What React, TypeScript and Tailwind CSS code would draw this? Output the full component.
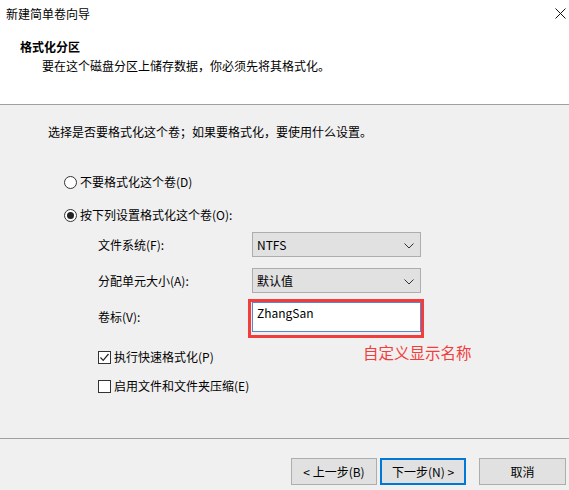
import React from "react";

const Chevron = () => (
  <svg width="10" height="6" viewBox="0 0 10 6" className="absolute right-[6px] top-[10px]">
    <path d="M0.5 0.5 L5 5 L9.5 0.5" fill="none" stroke="#333" strokeWidth="1" />
  </svg>
);

export default function App() {
  return (
    <div
      className="w-[569px] h-[490px] bg-[#f0f0f0] flex flex-col text-[12px] text-black overflow-hidden"
      style={{ fontFamily: '"Noto Sans CJK SC", "Noto Sans", sans-serif' }}
    >
      {/* header */}
      <div className="h-[104px] bg-white relative pl-[6px] pt-[6px] shrink-0">
        <div className="leading-[16px]">新建简单卷向导</div>
        <svg width="11" height="11" viewBox="0 0 11 11" className="absolute left-[555px] top-[8px]">
          <path d="M0.5 0.5 L10.5 10.5 M10.5 0.5 L0.5 10.5" stroke="#111" strokeWidth="1" fill="none" />
        </svg>
        <div className="mt-[17px] ml-[14px] font-bold leading-[16px]">格式化分区</div>
        <div className="mt-[3px] ml-[36px] leading-[16px]">要在这个磁盘分区上储存数据，你必须先将其格式化。</div>
      </div>
      <div className="h-px bg-[#a0a0a0] shrink-0" />

      {/* body */}
      <div className="h-[333px] pl-[48px] pt-[19px] relative shrink-0">
        <div className="leading-[16px]">选择是否要格式化这个卷；如果要格式化，要使用什么设置。</div>

        <div className="mt-[34px] ml-[16px] flex items-center h-[16px]">
          <span className="w-[13px] h-[13px] rounded-full border border-[#333] bg-white" />
          <span className="ml-[3px] leading-[16px]">不要格式化这个卷(D)</span>
        </div>
        <div className="mt-[17px] ml-[16px] flex items-center h-[16px]">
          <span className="w-[13px] h-[13px] rounded-full border border-[#333] bg-white flex items-center justify-center">
            <span className="w-[7px] h-[7px] rounded-full bg-[#222]" />
          </span>
          <span className="ml-[3px] leading-[16px]">按下列设置格式化这个卷(O):</span>
        </div>

        <div className="ml-[50px]">
          <div className="mt-[9px] flex items-center">
            <span className="w-[154px] leading-[16px]">文件系统(F):</span>
            <div className="relative w-[169px] h-[25px] bg-[#e1e1e1] border border-[#adadad] pl-[4px] leading-[23px]">
              NTFS
              <Chevron />
            </div>
          </div>
          <div className="mt-[11px] flex items-center">
            <span className="w-[154px] leading-[16px]">分配单元大小(A):</span>
            <div className="relative w-[169px] h-[25px] bg-[#e1e1e1] border border-[#adadad] pl-[4px] leading-[23px]">
              默认值
              <Chevron />
            </div>
          </div>
          <div className="mt-[9px] flex items-center">
            <span className="w-[154px] leading-[16px]">卷标(V):</span>
            <div className="relative w-[169px] h-[30px] bg-white border border-[#5a85d0] pl-[4px] pt-[2px] leading-[16px]">
              ZhangSan
              <div className="absolute left-[-5px] top-[-4px] w-[176px] h-[39px] border-[3px] border-[#f23d3d]" />
            </div>
          </div>

          <div className="mt-[17px] flex items-center h-[16px]">
            <span className="w-[13px] h-[13px] border border-[#333] bg-white flex items-center justify-center">
              <svg width="11" height="11" viewBox="0 0 11 11">
                <path d="M1.5 5.5 L4.2 8.3 L9.5 2" fill="none" stroke="#222" strokeWidth="1.2" />
              </svg>
            </span>
            <span className="ml-[3px] leading-[16px]">执行快速格式化(P)</span>
          </div>
          <div className="mt-[13px] flex items-center h-[16px]">
            <span className="w-[13px] h-[13px] border border-[#333] bg-white" />
            <span className="ml-[3px] leading-[16px]">启用文件和文件夹压缩(E)</span>
          </div>
        </div>

        <div className="absolute left-[363px] top-[237px] text-[15.5px] leading-[20px] text-[#f23d3d]">
          自定义显示名称
        </div>
      </div>
      <div className="h-px bg-[#a0a0a0] shrink-0" />

      {/* footer */}
      <div className="flex items-start pt-[19px] pl-[291px]">
        <button className="w-[86px] h-[27px] bg-[#e1e1e1] border border-[#adadad] text-[12px] leading-[25px]">
          &lt; 上一步(B)
        </button>
        <button className="ml-[3px] w-[86px] h-[27px] bg-[#e1e1e1] border-2 border-[#0078d7] text-[12px] leading-[23px]">
          下一步(N) &gt;
        </button>
        <button className="ml-[13px] w-[87px] h-[27px] bg-[#e1e1e1] border border-[#adadad] text-[12px] leading-[25px]">
          取消
        </button>
      </div>
    </div>
  );
}
